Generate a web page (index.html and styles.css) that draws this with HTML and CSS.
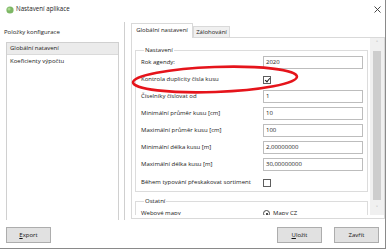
FILE: index.html
```html
<!DOCTYPE html>
<html lang="cs">
<head>
  <meta charset="UTF-8" />
  <title>Nastavení aplikace</title>
  <link rel="stylesheet" href="styles.css">
</head>
<body>
  <div class="window">
    <div class="titlebar">
      <svg class="app-icon" width="8" height="8" viewBox="0 0 8 8">
        <circle cx="4" cy="4" r="3.6" fill="#7db765"/>
        <circle cx="3" cy="3" r="1.6" fill="#a9d78f"/>
      </svg>
      <span class="title">Nastavení aplikace</span>
      <svg class="close" width="7" height="7" viewBox="0 0 7 7">
        <path d="M0.5 0.5 L6.5 6.5 M6.5 0.5 L0.5 6.5" stroke="#333" stroke-width="0.9"/>
      </svg>
    </div>

    <div class="content">
      <div class="sidebar">
        <div class="sidebar-title">Položky konfigurace</div>
        <ul class="list">
          <li class="selected">Globální natavení</li>
          <li>Koeficienty výpočtu</li>
        </ul>
      </div>

      <div class="panel">
        <div class="tabs">
          <div class="tab active">Globální nastavení</div>
          <div class="tab">Zálohování</div>
        </div>
        <div class="tab-page">
          <div class="scroll-area">
            <fieldset class="group">
              <legend>Nastavení</legend>
              <div class="row"><span class="label">Rok agendy:</span><span class="field">2020</span></div>
              <div class="row"><span class="label">Kontrola duplicity čísla kusu</span><span class="check checked"></span></div>
              <div class="row"><span class="label">Číselníky číslovat od</span><span class="field">1</span></div>
              <div class="row"><span class="label">Minimální průměr kusu [cm]</span><span class="field">10</span></div>
              <div class="row"><span class="label">Maximální průměr kusu [cm]</span><span class="field">100</span></div>
              <div class="row"><span class="label">Minimální délka kusu [m]</span><span class="field">2,00000000</span></div>
              <div class="row"><span class="label">Maximální délka kusu [m]</span><span class="field">30,00000000</span></div>
              <div class="row last"><span class="label">Během typování přeskakovat sortiment</span><span class="check"></span></div>
            </fieldset>
            <fieldset class="group">
              <legend>Ostatní</legend>
              <div class="row"><span class="label">Webové mapy</span><span class="radio"></span><span class="radio-text">Mapy CZ</span></div>
            </fieldset>
          </div>
          <div class="scrollbar">
            <div class="arrow">&#x2C4;</div>
            <div class="thumb"></div>
            <div class="arrow">&#x2C5;</div>
          </div>
        </div>
      </div>
    </div>

    <div class="footer">
      <button class="btn"><u>E</u>xport</button>
      <div class="spacer"></div>
      <button class="btn"><u>U</u>ložit</button>
      <button class="btn">Zavřít</button>
    </div>
  </div>

  <!-- red highlight drawn over the dialog -->
  <svg class="mark" width="387" height="250" viewBox="0 0 387 250">
    <ellipse cx="215" cy="79.5" rx="82" ry="12.5" transform="rotate(-2 215 79.5)"
             fill="none" stroke="#e5141b" stroke-width="2.6"/>
  </svg>
</body>
</html>
```

FILE: styles.css
```css
* {
  margin: 0;
  padding: 0;
  box-sizing: border-box;
}
body {
  width: 387px;
  height: 250px;
  background: white;
  font-family: 'Open Sans', 'Noto Sans', sans-serif;
  font-size: 6px;
  color: #1a1a1a;
  overflow: hidden;
  position: relative;
}
.window {
  width: 386px;
  height: 249px;
  border-right: 1px solid #8a8a8a;
  border-bottom: 1px solid #8a8a8a;
  display: flex;
  flex-direction: column;
}
.titlebar {
  height: 22px;
  flex-shrink: 0;
  display: flex;
  align-items: flex-start;
  padding: 5px 0 0 6px;
}
.app-icon {
  margin-top: 1px;
}
.title {
  margin-left: 2px;
  line-height: 8px;
  font-size: 6.2px;
  color: #222;
}
.close {
  margin-left: auto;
  margin-right: 4px;
  margin-top: 1px;
}
.content {
  flex: 1;
  min-height: 0;
  display: flex;
  overflow: hidden;
}
.sidebar {
  width: 124px;
  display: flex;
  flex-direction: column;
  padding: 6px 5px 0 4px;
}
.sidebar-title {
  line-height: 9px;
  margin-bottom: 5px;
}
.list {
  list-style: none;
  flex: 1;
  margin-left: 2px;
  border: 1px solid #d0d0d0;
  border-bottom: none;
}
.list li {
  height: 12px;
  line-height: 12px;
  padding-left: 3px;
}
.list li.selected {
  background: #ebebeb;
  border-bottom: 1px solid #dadada;
  line-height: 11px;
}
.panel {
  flex: 1;
  min-height: 0;
  border-left: 1px solid #cfcfcf;
  padding: 1px 0 1px 6px;
  display: flex;
  flex-direction: column;
}
.tabs {
  display: flex;
  align-items: flex-end;
  height: 14px;
  flex-shrink: 0;
}
.tab {
  height: 11px;
  line-height: 10px;
  text-align: center;
  border: 1px solid #d9d9d9;
  border-bottom: none;
  background: #f0f0f0;
  width: 37px;
}
.tab.active {
  height: 15px;
  line-height: 12px;
  width: 62px;
  background: white;
  position: relative;
  z-index: 1;
  margin-bottom: -1px;
}
.tab-page {
  flex: 1;
  min-height: 0;
  border: 1px solid #d9d9d9;
  display: flex;
  overflow: hidden;
}
.scroll-area {
  flex: 1;
  padding: 8px 2px 0 3px;
  margin-bottom: 3px;
  overflow: hidden;
}
.group {
  border: 1px solid #dcdcdc;
  padding: 1px 3px 1px 5px;
}
.group + .group {
  margin-top: 5px;
}
.group legend {
  margin-left: 3px;
  padding: 0 1px;
  line-height: 9px;
}
.row {
  height: 17px;
  display: flex;
  align-items: flex-start;
}
.row.last {
  margin-top: 1px;
  height: 14px;
}
.label {
  width: 122px;
  height: 13px;
  line-height: 13px;
  white-space: nowrap;
}
.field {
  width: 100px;
  height: 13px;
  line-height: 11px;
  border: 1px solid #bdbdbd;
  padding-left: 2px;
}
.check {
  width: 8px;
  height: 8px;
  margin-top: 3px;
  border: 1px solid #5e5e5e;
  background: white;
  position: relative;
}
.check.checked::after {
  content: "";
  position: absolute;
  left: 1.5px;
  top: 0;
  width: 2px;
  height: 4px;
  border-right: 1px solid #222;
  border-bottom: 1px solid #222;
  transform: rotate(40deg);
}
.radio {
  width: 7px;
  height: 7px;
  margin-top: 3px;
  border: 1px solid #444;
  border-radius: 50%;
  position: relative;
}
.radio::after {
  content: "";
  position: absolute;
  left: 1.5px;
  top: 1.5px;
  width: 2px;
  height: 2px;
  border-radius: 50%;
  background: #111;
}
.radio-text {
  margin-left: 3px;
  line-height: 13px;
}
.scrollbar {
  width: 14px;
  background: #f0f0f0;
  display: flex;
  flex-direction: column;
  align-items: center;
  margin-bottom: 3px;
}
.arrow {
  height: 12px;
  line-height: 12px;
  font-size: 7px;
  color: #a0a0a0;
}
.thumb {
  flex: 1;
  width: 8px;
  background: #cdcdcd;
  margin: 1px 0 3px;
}
.footer {
  height: 28px;
  flex-shrink: 0;
  display: flex;
  align-items: flex-start;
  padding: 7px 6px 0 6px;
}
.spacer {
  flex: 1;
}
.btn {
  height: 16px;
  width: 45px;
  background: #e1e1e1;
  border: 1px solid #adadad;
  font-family: 'Open Sans', 'Noto Sans', sans-serif;
  font-size: 6px;
  color: #111;
}
.btn + .btn {
  margin-left: 12px;
}
.mark {
  position: absolute;
  left: 0;
  top: 0;
  pointer-events: none;
}
```
